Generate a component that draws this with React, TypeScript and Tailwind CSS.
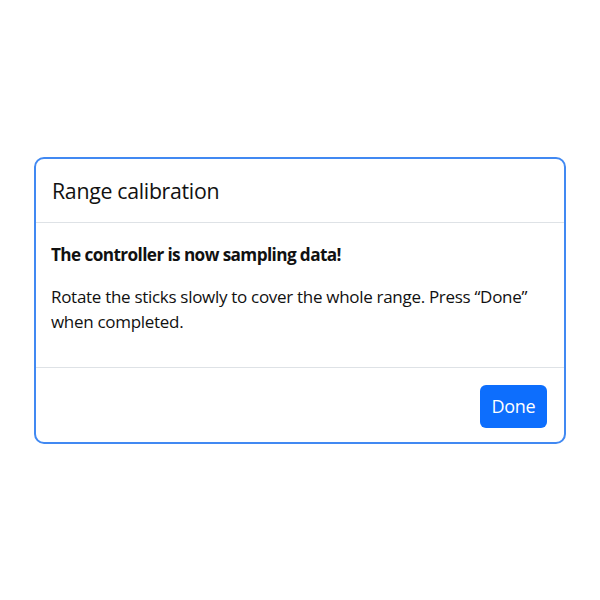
export default function App() {
  return (
    <div
      className="w-[600px] h-[600px] bg-white flex items-center justify-center"
      style={{ fontFamily: '"Open Sans", "Liberation Sans", sans-serif' }}
    >
      <div className="w-[532px] h-[287px] rounded-[10px] border-2 border-[#4189f2] bg-white flex flex-col">
        <div className="h-[64px] px-[16px] flex items-center border-b border-[#dee2e6]">
          <h1 className="text-[21.3px] text-[#111] tracking-[-0.3px] pt-[1px]">Range calibration</h1>
        </div>
        <div className="h-[145px] px-[15px] pt-[19px] border-b border-[#dee2e6]">
          <p className="text-[17.2px] font-bold text-[#111] tracking-[-0.6px]">The controller is now sampling data!</p>
          <p className="mt-[17px] text-[17px] leading-[25px] text-[#111] tracking-[-0.3px]">
            Rotate the sticks slowly to cover the whole range. Press “Done” when completed.
          </p>
        </div>
        <div className="flex-1 flex items-start justify-end px-[17px] pt-[17px]">
          <button className="w-[67px] h-[43px] rounded-[6px] bg-[#0d6efd] text-white text-[18px] tracking-[-0.3px]">
            Done
          </button>
        </div>
      </div>
    </div>
  )
}
